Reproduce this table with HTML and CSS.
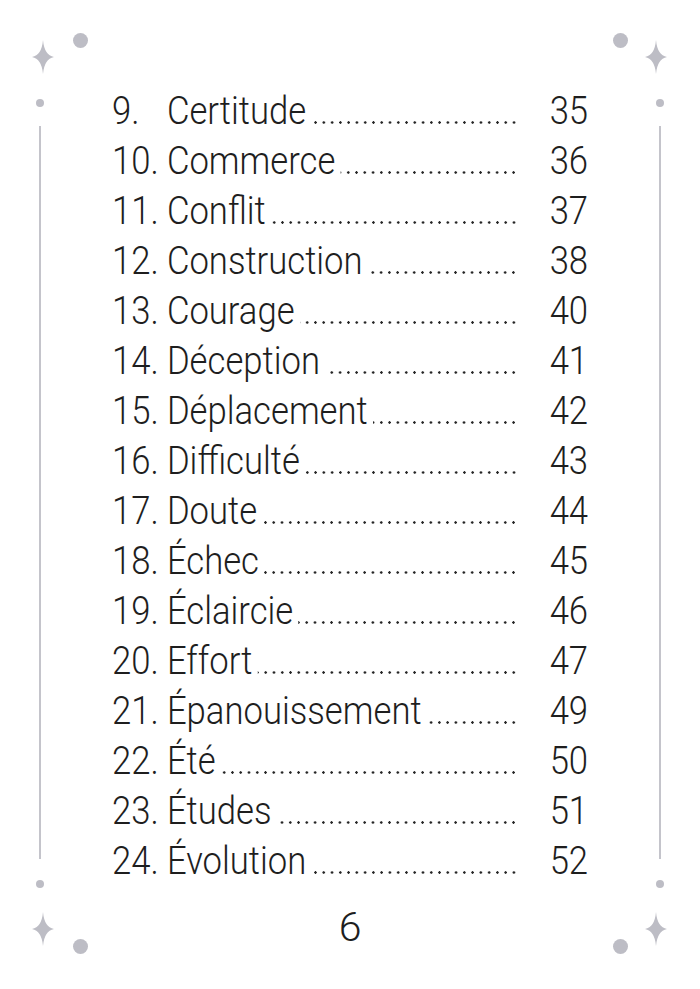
FILE: index.html
```html
<!DOCTYPE html>
<html lang="fr">
<head>
<meta charset="utf-8">
<title>Sommaire</title>
<link rel="stylesheet" href="styles.css">
</head>
<body>
<div class="page">
  <span class="dot big bTL"></span>
  <span class="dot big bTR"></span>
  <span class="dot big bBL"></span>
  <span class="dot big bBR"></span>
  <span class="dot small sTL"></span>
  <span class="dot small sTR"></span>
  <span class="dot small sBL"></span>
  <span class="dot small sBR"></span>
  <svg class="spark kTL" viewBox="0 0 22 34"><path d="M11 0 Q12.3 15.2 22 17 Q12.3 18.8 11 34 Q9.7 18.8 0 17 Q9.7 15.2 11 0 Z"/></svg>
  <svg class="spark kTR" viewBox="0 0 22 34"><path d="M11 0 Q12.3 15.2 22 17 Q12.3 18.8 11 34 Q9.7 18.8 0 17 Q9.7 15.2 11 0 Z"/></svg>
  <svg class="spark kBL" viewBox="0 0 22 34"><path d="M11 0 Q12.3 15.2 22 17 Q12.3 18.8 11 34 Q9.7 18.8 0 17 Q9.7 15.2 11 0 Z"/></svg>
  <svg class="spark kBR" viewBox="0 0 22 34"><path d="M11 0 Q12.3 15.2 22 17 Q12.3 18.8 11 34 Q9.7 18.8 0 17 Q9.7 15.2 11 0 Z"/></svg>
  <span class="rule rL"></span>
  <span class="rule rR"></span>

  <ol class="toc">
    <li class="row"><span class="num">9.</span><span class="title">Certitude</span><span class="leader"></span><span class="pg">35</span></li>
    <li class="row"><span class="num">10.</span><span class="title">Commerce</span><span class="leader"></span><span class="pg">36</span></li>
    <li class="row"><span class="num">11.</span><span class="title">Conflit</span><span class="leader"></span><span class="pg">37</span></li>
    <li class="row"><span class="num">12.</span><span class="title">Construction</span><span class="leader"></span><span class="pg">38</span></li>
    <li class="row"><span class="num">13.</span><span class="title">Courage</span><span class="leader"></span><span class="pg">40</span></li>
    <li class="row"><span class="num">14.</span><span class="title">Déception</span><span class="leader"></span><span class="pg">41</span></li>
    <li class="row"><span class="num">15.</span><span class="title">Déplacement</span><span class="leader"></span><span class="pg">42</span></li>
    <li class="row"><span class="num">16.</span><span class="title">Difficulté</span><span class="leader"></span><span class="pg">43</span></li>
    <li class="row"><span class="num">17.</span><span class="title">Doute</span><span class="leader"></span><span class="pg">44</span></li>
    <li class="row"><span class="num">18.</span><span class="title">Échec</span><span class="leader"></span><span class="pg">45</span></li>
    <li class="row"><span class="num">19.</span><span class="title">Éclaircie</span><span class="leader"></span><span class="pg">46</span></li>
    <li class="row"><span class="num">20.</span><span class="title">Effort</span><span class="leader"></span><span class="pg">47</span></li>
    <li class="row"><span class="num">21.</span><span class="title">Épanouissement</span><span class="leader"></span><span class="pg">49</span></li>
    <li class="row"><span class="num">22.</span><span class="title">Été</span><span class="leader"></span><span class="pg">50</span></li>
    <li class="row"><span class="num">23.</span><span class="title">Études</span><span class="leader"></span><span class="pg">51</span></li>
    <li class="row"><span class="num">24.</span><span class="title">Évolution</span><span class="leader"></span><span class="pg">52</span></li>
  </ol>

  <div class="folio">6</div>
</div>
</body>
</html>
```

FILE: styles.css
```css
html, body {
  margin: 0;
  padding: 0;
  background: #ffffff;
}

.page {
  position: relative;
  width: 700px;
  height: 989px;
  overflow: hidden;
  background: #ffffff;
  font-family: "Roboto", "Liberation Sans", sans-serif;
  font-weight: 300;
  color: #1e1e1e;
}

/* ornaments */
.dot {
  position: absolute;
  border-radius: 50%;
  background: #bdbdc5;
}
.dot.big { width: 15px; height: 15px; margin: -7.5px 0 0 -7.5px; }
.dot.small { width: 8px; height: 8px; margin: -4px 0 0 -4px; }
.bTL { left: 80px; top: 40px; }
.bTR { left: 620px; top: 40px; }
.bBL { left: 80px; top: 946px; }
.bBR { left: 620px; top: 946px; }
.sTL { left: 40px; top: 103px; }
.sTR { left: 660px; top: 103px; }
.sBL { left: 40px; top: 884px; }
.sBR { left: 660px; top: 884px; }

.spark {
  position: absolute;
  width: 22px;
  height: 34px;
  margin: -17px 0 0 -11px;
  fill: #bdbdc5;
}
.kTL { left: 43px; top: 57px; }
.kTR { left: 656px; top: 57px; }
.kBL { left: 43px; top: 929px; }
.kBR { left: 656px; top: 929px; }

.rule {
  position: absolute;
  top: 126px;
  width: 2px;
  height: 733px;
  margin-left: -1px;
  background: #c4c4cb;
}
.rL { left: 40px; }
.rR { left: 660px; }

/* table of contents */
.toc {
  list-style: none;
  margin: 0;
  padding: 86px 0 0 112px;
  width: 529px;
  transform: scaleX(0.9);
  transform-origin: 112px 0;
}

.row {
  display: flex;
  align-items: baseline;
  height: 50px;
  line-height: 50px;
  font-size: 38.5px;
}

.num {
  flex: 0 0 61px;
}

.title {
  flex: 0 0 auto;
  white-space: nowrap;
}

.leader {
  flex: 1 1 auto;
  display: block;
  height: 3px;
  margin-left: 6px;
  background-image: radial-gradient(circle at center, #262626 0, #262626 1.05px, rgba(38, 38, 38, 0) 1.55px);
  background-size: 9.2px 3px;
  background-repeat: repeat-x;
  background-position: right bottom;
}

.pg {
  flex: 0 0 78px;
  text-align: right;
}

.folio {
  position: absolute;
  left: 0;
  right: 0;
  top: 902px;
  text-align: center;
  font-size: 41px;
  line-height: 50px;
}
```
